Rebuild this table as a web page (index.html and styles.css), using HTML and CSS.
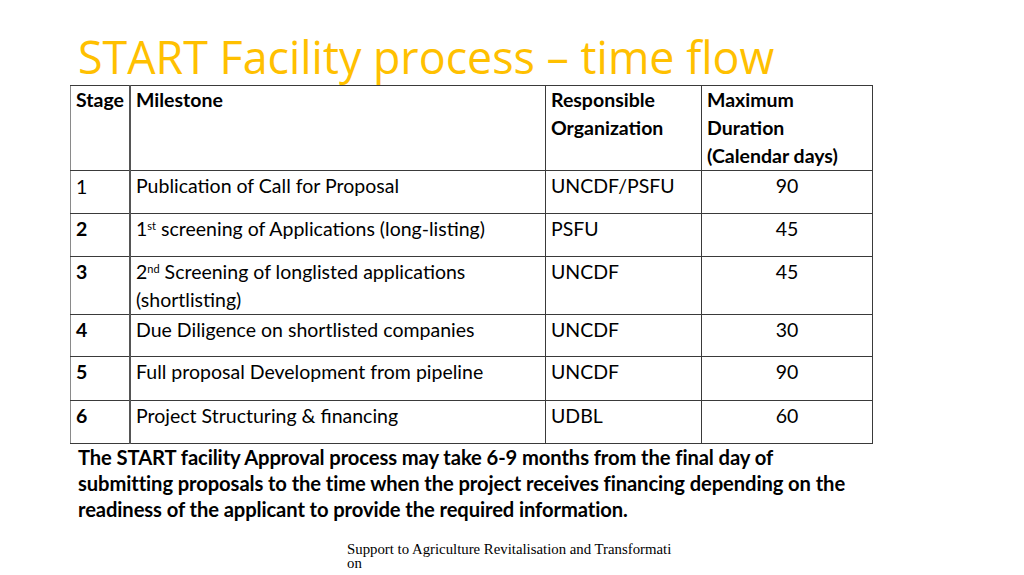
FILE: index.html
```html
<!DOCTYPE html>
<html lang="en">
<head>
<meta charset="utf-8">
<title>START Facility process – time flow</title>
<link rel="stylesheet" href="styles.css">
</head>
<body>
<div class="slide">
  <h1 class="title">START Facility process – time flow</h1>
  <table class="flow">
    <tr class="r-head">
      <th class="c-stage">Stage</th>
      <th class="c-mile">Milestone</th>
      <th class="c-resp">Responsible Organization</th>
      <th class="c-max">Maximum Duration (Calendar days)</th>
    </tr>
    <tr class="r-one">
      <td class="c-stage plain">1</td>
      <td class="c-mile">Publication of Call for Proposal</td>
      <td class="c-resp">UNCDF/PSFU</td>
      <td class="c-max num">90</td>
    </tr>
    <tr class="r-one">
      <td class="c-stage">2</td>
      <td class="c-mile">1<sup>st</sup> screening of Applications (long-listing)</td>
      <td class="c-resp">PSFU</td>
      <td class="c-max num">45</td>
    </tr>
    <tr class="r-two">
      <td class="c-stage">3</td>
      <td class="c-mile">2<sup>nd</sup> Screening of longlisted applications (shortlisting)</td>
      <td class="c-resp">UNCDF</td>
      <td class="c-max num">45</td>
    </tr>
    <tr class="r-four">
      <td class="c-stage">4</td>
      <td class="c-mile">Due Diligence on shortlisted companies</td>
      <td class="c-resp">UNCDF</td>
      <td class="c-max num">30</td>
    </tr>
    <tr class="r-five">
      <td class="c-stage">5</td>
      <td class="c-mile">Full proposal Development from pipeline</td>
      <td class="c-resp">UNCDF</td>
      <td class="c-max num">90</td>
    </tr>
    <tr class="r-one">
      <td class="c-stage">6</td>
      <td class="c-mile">Project Structuring &amp; financing</td>
      <td class="c-resp">UDBL</td>
      <td class="c-max num">60</td>
    </tr>
  </table>
  <p class="note">The START facility Approval process may take 6-9 months from the final day of<br>submitting proposals to the time when the project receives financing depending on the<br>readiness of the applicant to provide the required information.</p>
  <div class="footer">Support to Agriculture Revitalisation and Transformation</div>
</div>
</body>
</html>
```

FILE: styles.css
```css
html, body {
  margin: 0;
  padding: 0;
  background: #ffffff;
}

.slide {
  width: 1024px;
  height: 575px;
  position: relative;
  overflow: hidden;
  box-sizing: border-box;
  padding: 28px 0 0 70px;
  font-family: "Lato", "Liberation Sans", sans-serif;
  color: #000;
}

.title {
  margin: 0 0 0 8px;
  font-family: "Open Sans", "Liberation Sans", sans-serif;
  font-weight: 400;
  font-size: 44.8px;
  line-height: 57px;
  color: #FFC000;
  height: 57px;
}

.flow {
  border-collapse: collapse;
  table-layout: fixed;
  width: 802px;
  font-size: 19.5px;
  line-height: 28px;
}

.flow th,
.flow td {
  border: 1px solid #3a3a3a;
  padding: 1px 5px 0 5px;
  vertical-align: top;
  text-align: left;
  font-weight: 400;
}

.flow th {
  font-weight: 700;
  padding-top: 0;
}

.flow .c-stage {
  width: 48px;
  font-weight: 700;
  border-left-color: #8a8a8a;
  border-right: 2px solid #555;
}

.flow .c-stage.plain {
  font-weight: 400;
  padding-top: 2px;
}

.flow .c-mile { width: 404px; }
.flow .c-resp { width: 145px; }
.flow .c-max  { width: 160px; }

.flow .num {
  text-align: center;
}

.flow sup {
  font-size: 11px;
  line-height: 0;
  vertical-align: 6px;
}

.r-head { height: 84px; }
.r-one  { height: 43px; }
.r-two  { height: 57px; }
.r-four { height: 42px; }
.r-five { height: 44px; }

.note {
  margin: 0 0 0 8px;
  font-weight: 700;
  font-size: 20.2px;
  line-height: 26px;
  letter-spacing: -0.1px;
}

.footer {
  position: absolute;
  left: 347px;
  top: 542px;
  width: 327px;
  font-family: "Liberation Serif", serif;
  font-size: 14.8px;
  line-height: 14px;
  word-break: break-all;
}
```
